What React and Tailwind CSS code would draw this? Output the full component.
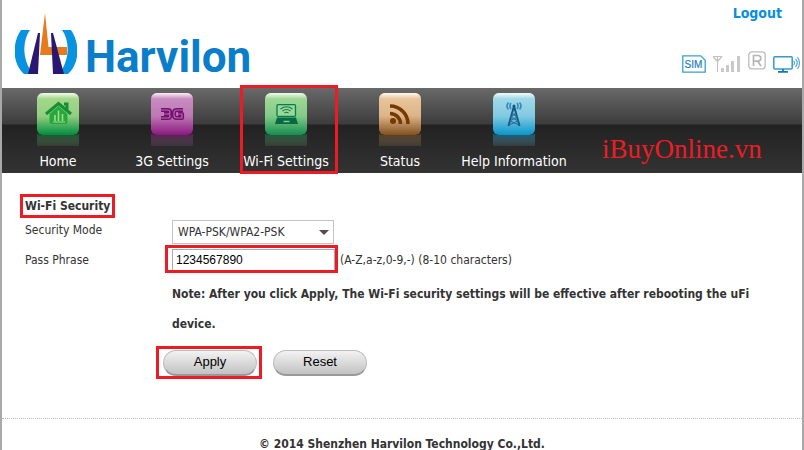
import React from "react";

const sans = "font-['DejaVu_Sans_Condensed','DejaVu_Sans',sans-serif]";

function LogoMark() {
  return (
    <svg width="62" height="62" viewBox="0 0 62 62" aria-hidden="true">
      <path d="M6 17h9C7 28 7 47 18 61H9C-3 50-3 30 6 17z" fill="#0793e0" />
      <path d="M56 17h-9C55 28 55 47 44 61h9C65 50 65 30 56 17z" fill="#0793e0" />
      <path d="M30 0l3.500 34H52v8H25z" fill="#e67a1d" />
      <path d="M23 20h2l-2 41H13z" fill="#2b176f" />
      <path d="M36 20h2l11 41H38z" fill="#2b176f" />
    </svg>
  );
}

function SimIcon() {
  return (
    <svg width="24" height="18" viewBox="0 0 24 18" role="img" aria-label="SIM card">
      <path d="M.8.8h18l4.400 4.400v12H.8z" fill="#fff" stroke="#3a9fd0" strokeWidth="1.300" />
      <text x="11.500" y="13" textAnchor="middle" fontSize="10" fontFamily="Liberation Sans, sans-serif" fill="#2580b8" stroke="#2580b8" strokeWidth=".2">SIM</text>
    </svg>
  );
}

function SignalIcon() {
  return (
    <svg width="28" height="18" viewBox="0 0 28 18" aria-hidden="true">
      <path d="M0 1.500h9M0 1.500l4.500 5 4.500-5M4.500 1v16" fill="none" stroke="#c2c2c2" strokeWidth="1.200" />
      <path d="M8 13h3v4H8zM13 10h3v7h-3zM18 6h3v11h-3zM24 1h3v16h-3z" fill="#c8c8c8" />
    </svg>
  );
}

function RoamingIcon() {
  return (
    <svg width="18" height="19" viewBox="0 0 18 19" className="mb-[3px]" aria-hidden="true">
      <rect x=".8" y=".8" width="16.400" height="17" rx="3" fill="#fff" stroke="#bcbcbc" strokeWidth="1.300" />
      <path d="M5.500 15V4.500H10a2.800 2.800 0 010 5.600H5.500M9.500 10l3.500 5" fill="none" stroke="#b5b5b5" strokeWidth="1.700" />
    </svg>
  );
}

function ScreenIcon() {
  return (
    <svg width="28" height="18" viewBox="0 0 28 18" aria-hidden="true">
      <rect x=".8" y="1.800" width="18.400" height="12.200" rx="1" fill="#fff" stroke="#319bd0" strokeWidth="1.500" />
      <path d="M10 14v2M5 16.800h10" stroke="#1b78ad" strokeWidth="1.800" />
      <path d="M20.500 6q2 2 0 4.500M22.500 4q3.500 4 0 8M24.500 2q4 6 0 12" fill="none" stroke="#58add8" strokeWidth="1.200" />
    </svg>
  );
}

function HomeGlyph() {
  return (
    <g>
      <path d="M9 22L21.500 11.500 34 22M27 12h3v6" fill="none" stroke="#168e35" strokeWidth="3" />
      <path d="M12.500 22l9-8 9 8v8q0 2-2 2h-14q-2 0-2-2z" fill="#25a93d" />
      <path d="M18 29v-6M21.500 29V18.500M25.500 29v-7" stroke="#a0dc8b" strokeWidth="1.600" />
      <path d="M16 30h12" stroke="#a0dc8b" />
    </g>
  );
}

function ThreeGGlyph() {
  return (
    <g fill="none" strokeLinejoin="round">
      <path d="M10 18h7q2 0 2 2t-2 2h-4M17 22q2 0 2 2t-2 2h-7M32 18h-6q-3 0-3 3v2q0 3 3 3h5v-4h-4" stroke="#74106e" strokeWidth="4.200" />
      <path d="M10 18h7q2 0 2 2t-2 2h-4M17 22q2 0 2 2t-2 2h-7M32 18h-6q-3 0-3 3v2q0 3 3 3h5v-4h-4" stroke="#b568ad" strokeWidth="1.200" />
    </g>
  );
}

function LaptopGlyph() {
  return (
    <g>
      <rect x="12" y="12.700" width="18.500" height="11.600" rx="1" fill="#9bd795" stroke="#087c50" strokeWidth="1.300" />
      <path d="M15.500 17q6-4.500 12 0M17.500 19q4-3 8 0M19.500 21q2-1.500 4 0" fill="none" stroke="#087c50" strokeWidth="1.100" />
      <path d="M12 25.500h19l2 6.500H10z" fill="#056a43" />
      <path d="M18.500 29.500h6" stroke="#83c98e" strokeWidth="1.500" />
    </g>
  );
}

function FeedGlyph() {
  return (
    <g fill="none" stroke="#783806" strokeWidth="3.600">
      <circle cx="14" cy="29" r="3" fill="#783806" stroke="none" />
      <path d="M11 21.500A10.500 10.500 0 0121.500 32" />
      <path d="M11 14A18 18 0 0129 32" />
    </g>
  );
}

function TowerGlyph() {
  return (
    <g fill="none">
      <path d="M21 14l-5.500 20M21 14l5.500 20" stroke="#175680" strokeWidth="2" />
      <path d="M19 21l5 4-7 4 9 4M23 21l-5 4 7 4-9 4" stroke="#2b719c" strokeWidth="1.100" />
      <circle cx="21" cy="14" r="1.500" fill="#175680" />
      <path d="M18 11q-2 3 0 6M15.500 10.500q-3 3.500 0 7M24 11q2 3 0 6M26.500 10.500q3 3.500 0 7" stroke="#378cb9" strokeWidth="1.700" />
    </g>
  );
}

const navItems = [
  { id: "home", label: "Home", colors: ["#a9da8d", "#93cf80", "#008c3e"], Glyph: HomeGlyph },
  { id: "3g", label: "3G Settings", colors: ["#cc91c5", "#bd79b4", "#8b187f"], Glyph: ThreeGGlyph },
  { id: "wifi", label: "Wi-Fi Settings", colors: ["#a9da99", "#82cb88", "#168d50"], Glyph: LaptopGlyph },
  { id: "status", label: "Status", colors: ["#edcaa3", "#dcb486", "#845020"], Glyph: FeedGlyph },
  { id: "help", label: "Help Information", colors: ["#a9dcec", "#82cae2", "#0795ca"], Glyph: TowerGlyph },
];

function Tile({ id, colors, Glyph }) {
  return (
    <svg width="42" height="54" viewBox="0 0 42 54" aria-hidden="true">
      <defs>
        <linearGradient id={id + "-fill"} x1="0" y1="0" x2="0" y2="1">
          <stop offset="0" stopColor={colors[0]} />
          <stop offset=".55" stopColor={colors[1]} />
          <stop offset="1" stopColor={colors[2]} />
        </linearGradient>
        <linearGradient id={id + "-mirror"} x1="0" y1="0" x2="0" y2="1">
          <stop offset="0" stopColor={colors[2]} stopOpacity=".5" />
          <stop offset="1" stopColor={colors[1]} stopOpacity=".12" />
        </linearGradient>
        <linearGradient id={id + "-shine"} x1="0" y1="0" x2="0" y2="1">
          <stop offset="0" stopColor="#fff" stopOpacity=".85" />
          <stop offset=".14" stopColor="#fff" stopOpacity="0" />
        </linearGradient>
      </defs>
      <path d="M0 41q1 2 5 2h32q4 0 5-2v13H0z" fill={`url(#${id}-mirror)`} />
      <rect y="1" width="42" height="42" rx="6" fill={`url(#${id}-fill)`} />
      <rect y="1" width="42" height="42" rx="6" fill={`url(#${id}-shine)`} />
      <Glyph />
    </svg>
  );
}

function Highlight({ className }) {
  return <span aria-hidden="true" className={"pointer-events-none absolute border-3 border-[#ed1c24] " + className} />;
}

function PillButton({ children, type }) {
  return (
    <button type={type} className="flex h-[26px] w-[94px] items-center justify-center rounded-full border border-[#bdbdbd] border-b-2 border-b-[#999] bg-linear-to-b from-[#f3f3f3] to-[#c2c2c2] pb-px font-['Liberation_Sans',Arial,sans-serif] text-[13px] leading-5 text-black">
      {children}
    </button>
  );
}

export default function App() {
  return (
    <div className={"min-h-screen overflow-hidden border-x-2 border-[#a9a9a9] bg-white text-xs text-[#333] " + sans}>
      <header className="flex h-[88px] justify-between pl-[13px]">
        <div className="flex items-start gap-2 pt-[13px]">
          <LogoMark />
          <h1 className="pt-[26px] font-['Roboto',sans-serif] text-[44px] leading-[36px] font-bold text-[#0a7ec8]">Harvilon</h1>
        </div>
        <div className="flex flex-col items-end justify-between pb-[15px]">
          <a href="#logout" className="pt-1 pr-5 text-sm leading-[18px] font-bold text-[#078fdf]">Logout</a>
          <div className="flex items-end gap-[7px] pr-px">
            <SimIcon />
            <SignalIcon />
            <RoamingIcon />
            <ScreenIcon />
          </div>
        </div>
      </header>

      <nav className="relative flex h-[85px] gap-4 bg-[linear-gradient(#696969_0px,#3c3c3c_36px,#222_37px,#333_85px)] pl-[7px]">
        {navItems.map((item) => (
          <a key={item.id} href={"#" + item.id} className="flex w-[98px] flex-col items-center pt-1 text-sm leading-[18px] whitespace-nowrap text-white">
            <Tile {...item} />
            <span className="pt-[6px]">{item.label}</span>
          </a>
        ))}
        <Highlight className="-top-[3px] left-[238px] h-[89px] w-[98px]" />
        <span className="absolute top-[45px] left-[600px] font-['Liberation_Serif',serif] text-[27px] leading-8 text-[#ed1c24]">iBuyOnline.vn</span>
      </nav>

      <main className="px-[23px] pt-6">
        <form onSubmit={(e) => e.preventDefault()}>
          <h2 className="relative w-fit leading-[18px] font-bold">
            Wi-Fi Security
            <Highlight className="-top-[3px] -left-[5px] h-6 w-[95px]" />
          </h2>
          <div className="flex h-[30px]">
            <label htmlFor="mode" className="w-[147px] leading-[30px]">Security Mode</label>
            <div className="relative mt-[5px] h-6">
              <select id="mode" className="h-6 w-[162px] appearance-none rounded-none border border-[#c4c4c4] bg-white pl-[5px]">
                <option>WPA-PSK/WPA2-PSK</option>
              </select>
              <svg className="pointer-events-none absolute top-[10px] right-[5px]" width="10" height="5" viewBox="0 0 10 5" aria-hidden="true">
                <path d="M0 0h10L5 5z" fill="#554d4b" />
              </svg>
            </div>
          </div>
          <div className="flex h-[30px]">
            <label htmlFor="phrase" className="w-[147px] leading-[30px]">Pass Phrase</label>
            <div className="relative mt-1 h-[22px]">
              <input id="phrase" type="text" defaultValue="1234567890" className="h-[22px] w-[163px] border border-[#aaa] bg-white px-[3px] font-['Liberation_Sans',Arial,sans-serif] text-xs text-black" />
              <Highlight className="-top-1 -left-[7px] h-7 w-[173px]" />
            </div>
            <span className="pl-[5px] leading-[30px]">(A-Z,a-z,0-9,-) (8-10 characters)</span>
          </div>
          <p className="mt-1 ml-[147px] max-w-[600px] leading-[30px] font-bold">
            Note: After you click Apply, The Wi-Fi security settings will be effective after rebooting the uFi device.
          </p>
          <div className="mt-[11px] ml-[138px] flex gap-4">
            <div className="relative h-[26px]">
              <PillButton type="submit">Apply</PillButton>
              <Highlight className="-top-1 -left-[7px] h-[33px] w-[106px]" />
            </div>
            <PillButton type="reset">Reset</PillButton>
          </div>
        </form>
      </main>

      <footer className="mt-[42px] border-t border-dotted border-[#bbb] pt-4 text-center leading-[18px] font-bold">
        © 2014 Shenzhen Harvilon Technology Co.,Ltd.
      </footer>
    </div>
  );
}
